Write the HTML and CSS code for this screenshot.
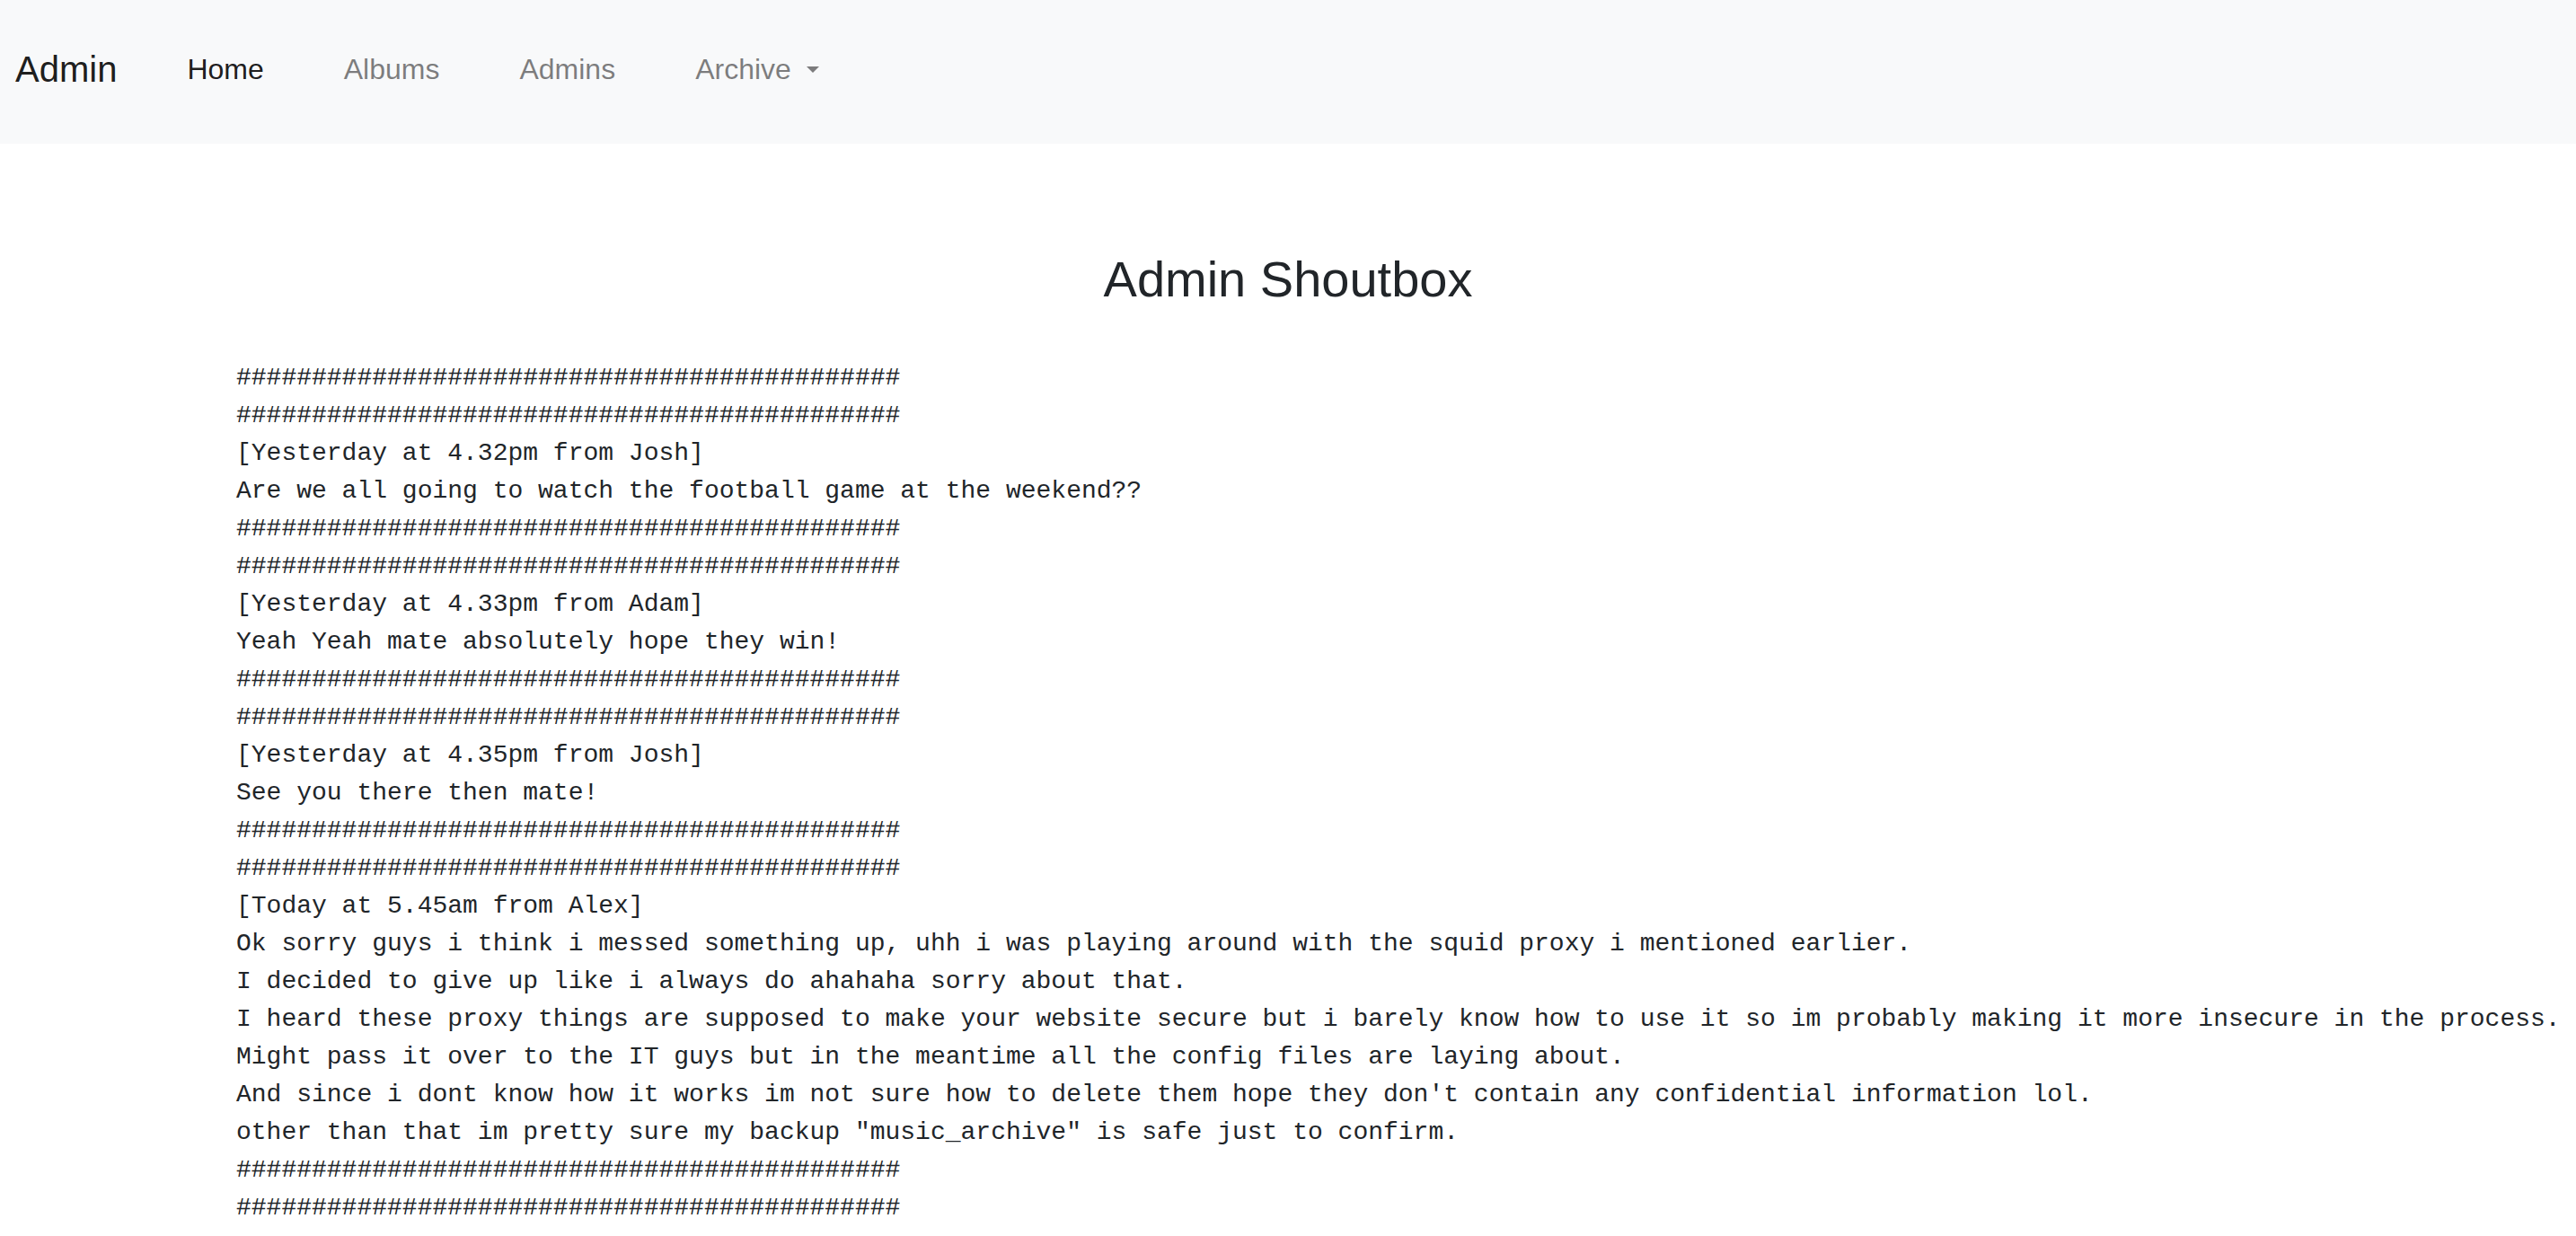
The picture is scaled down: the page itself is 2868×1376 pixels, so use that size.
FILE: index.html
```html
<!DOCTYPE html>
<html lang="en">
<head>
<meta charset="utf-8">
<title>Admin</title>
<link rel="stylesheet" href="styles.css">
</head>
<body>
<nav class="navbar">
  <a class="brand" href="#">Admin</a>
  <ul class="nav">
    <li><a class="nav-link active" href="#">Home</a></li>
    <li><a class="nav-link" href="#">Albums</a></li>
    <li><a class="nav-link" href="#">Admins</a></li>
    <li><a class="nav-link dropdown" href="#">Archive<span class="caret"></span></a></li>
  </ul>
</nav>
<main class="content">
  <h3 class="title">Admin Shoutbox</h3>
<pre class="shout">############################################
############################################
[Yesterday at 4.32pm from Josh]
Are we all going to watch the football game at the weekend??
############################################
############################################
[Yesterday at 4.33pm from Adam]
Yeah Yeah mate absolutely hope they win!
############################################
############################################
[Yesterday at 4.35pm from Josh]
See you there then mate!
############################################
############################################
[Today at 5.45am from Alex]
Ok sorry guys i think i messed something up, uhh i was playing around with the squid proxy i mentioned earlier.
I decided to give up like i always do ahahaha sorry about that.
I heard these proxy things are supposed to make your website secure but i barely know how to use it so im probably making it more insecure in the process.
Might pass it over to the IT guys but in the meantime all the config files are laying about.
And since i dont know how it works im not sure how to delete them hope they don't contain any confidential information lol.
other than that im pretty sure my backup "music_archive" is safe just to confirm.
############################################
############################################</pre>
</main>
</body>
</html>
```

FILE: styles.css
```css
html, body {
  margin: 0;
  padding: 0;
  background: #ffffff;
}

body {
  font-family: "Liberation Sans", Arial, sans-serif;
  color: #212529;
  font-size: 32px;
  line-height: 1.5;
}

.navbar {
  display: flex;
  align-items: center;
  height: 160px;
  box-sizing: border-box;
  padding: 0 0 7px 17px;
  background: #f8f9fa;
}

.brand {
  font-size: 40px;
  line-height: 60px;
  color: rgba(0, 0, 0, 0.9);
  text-decoration: none;
  margin-right: 78px;
}

.nav {
  display: flex;
  gap: 89px;
  list-style: none;
  margin: 0;
  padding: 0;
}

.nav-link {
  display: flex;
  align-items: center;
  font-size: 32px;
  line-height: 48px;
  color: rgba(0, 0, 0, 0.5);
  text-decoration: none;
}

.nav-link.active {
  color: rgba(0, 0, 0, 0.9);
}

.caret {
  display: inline-block;
  width: 0;
  height: 0;
  margin-left: 17px;
  margin-top: 2px;
  border-top: 7px solid rgba(0, 0, 0, 0.5);
  border-left: 7px solid transparent;
  border-right: 7px solid transparent;
}

.content {
  padding-top: 117px;
}

.title {
  margin: 0;
  text-align: center;
  font-size: 56px;
  font-weight: 400;
  line-height: 1.2;
  color: #212529;
}

.shout {
  margin: 56px 0 0 263px;
  font-family: "Liberation Mono", "Courier New", monospace;
  font-size: 28px;
  line-height: 42px;
  color: #212529;
  white-space: pre;
}
```
